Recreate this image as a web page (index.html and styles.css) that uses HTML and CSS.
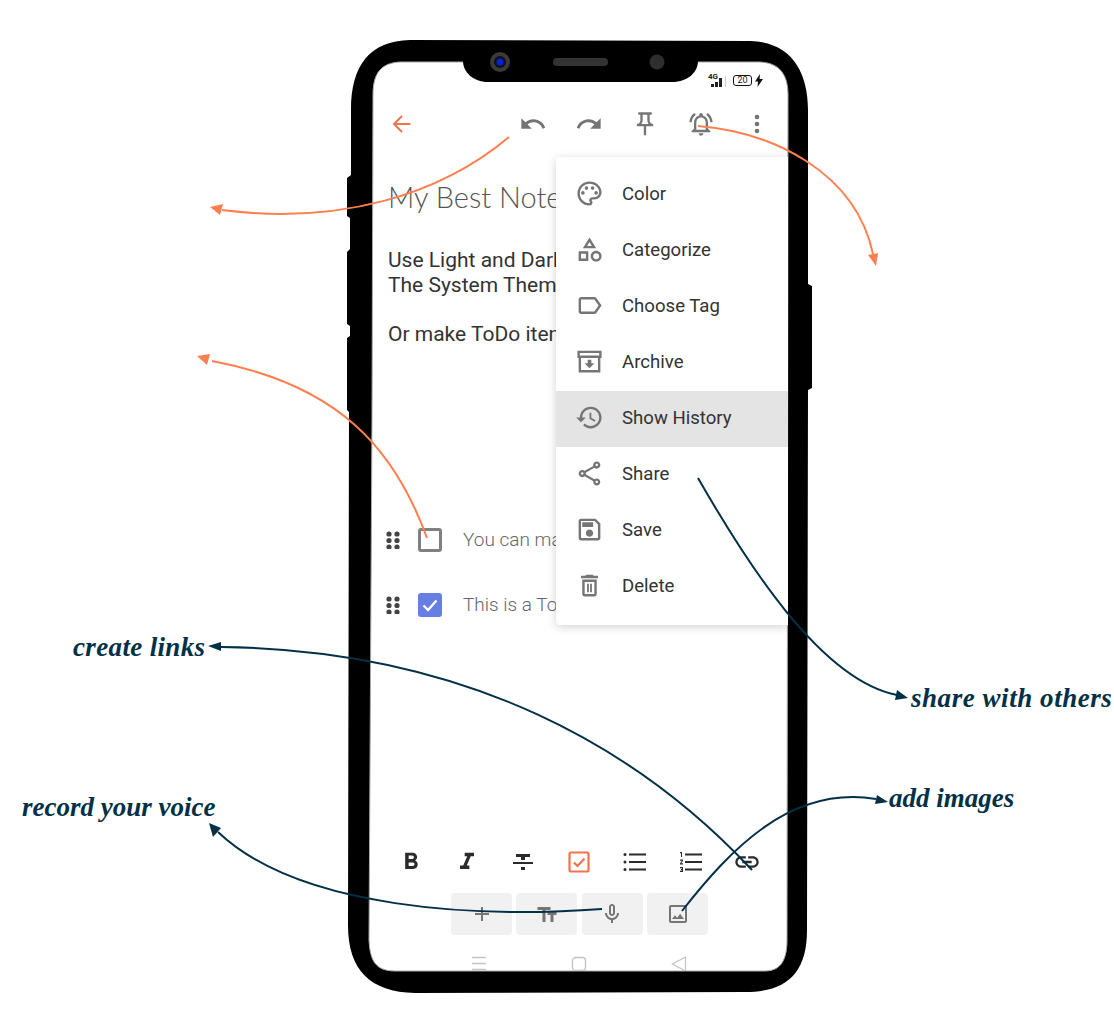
FILE: index.html
```html
<!DOCTYPE html>
<html>
<head>
  <title>Note editor overview</title>
  <link rel="stylesheet" href="styles.css">
</head>
<body>
  <div class="stage">
    <!-- phone body -->
    <svg class="layer" width="1114" height="1031" viewBox="0 0 1114 1031">
      <path fill="#000" d="M410 40L750 41C790 42 808 70 808 110L808 284L812 286L812 388L808 390L807 930C807 975 785 992 745 992L415 993C370 992 348 970 348 925L349 412L347 410L347 338L350 336L350 326L347 324L347 252L350 249L350 218L347 216L347 178L351 175L351 110C351 65 370 41 410 40Z"/>
      <path fill="#fff" stroke="#aaa" stroke-width="1" d="M373 95C373 72 382 63 400 62L760 62C780 63 788 75 788 95L787 940C787 958 782 971 765 971L395 971C375 971 370 960 369 940L372 420Z"/>
      <path fill="#000" d="M463 61L698 61C698 72 688 82 672 82L488 82C473 82 463 72 463 61Z"/>
      <circle cx="500" cy="62" r="10" fill="#3a3a3a"/>
      <circle cx="500" cy="62" r="6" fill="#111"/>
      <circle cx="500" cy="62" r="3.5" fill="#0a1fd8"/>
      <rect x="553" y="58" width="55" height="8" rx="4" fill="#333"/>
      <circle cx="657" cy="62" r="7.5" fill="#2e2e2e"/>
    </svg>

    <div class="screen">
      <div class="status">
        <div class="signal">
          <span class="net">4G</span>
          <div class="bars"><i class="b1"></i><i class="b2"></i><i class="b3"></i><i class="b4"></i></div>
        </div>
        <span class="battery">20</span>
        <svg class="bolt" width="8" height="13" viewBox="0 0 8 13"><path d="M5 0L0 7.5h3L2.5 13 8 5H4.6z"/></svg>
      </div>

      <div class="toolbar">
        <svg class="icon back" viewBox="0 0 24 24"><path d="M20.5 12H4M12 4l-8 8 8 8"/></svg>
        <div class="actions">
          <span class="cell"><svg class="icon big grey" viewBox="0 0 24 24"><path d="M12.5 8c-2.65 0-5.05.99-6.9 2.6L2 7v9h9l-3.62-3.62c1.39-1.16 3.16-1.88 5.12-1.88 3.54 0 6.55 2.31 7.6 5.5l2.37-.78C21.08 11.03 17.15 8 12.5 8z"/></svg></span>
          <span class="cell"><svg class="icon big grey" viewBox="0 0 24 24"><path d="M18.4 10.6C16.55 8.99 14.15 8 11.5 8c-4.65 0-8.58 3.03-9.96 7.22L3.9 16c1.05-3.19 4.05-5.5 7.6-5.5 1.95 0 3.73.72 5.12 1.88L13 16h9V7l-3.6 3.6z"/></svg></span>
          <span class="cell"><svg class="icon big grey" viewBox="0 0 24 24"><path d="M14 4v5c0 1.12.37 2.16 1 3H9c.65-.86 1-1.9 1-3V4h4m3-2H7c-.55 0-1 .45-1 1s.45 1 1 1h1v5c0 1.66-1.34 3-3 3v2h5.97v7l1 1 1-1v-7H19v-2c-1.66 0-3-1.34-3-3V4h1c.55 0 1-.45 1-1s-.45-1-1-1z"/></svg></span>
          <span class="cell"><svg class="icon big grey" viewBox="0 0 24 24"><path d="M7.58 4.08L6.15 2.65C3.75 4.48 2.17 7.3 2.03 10.5h2c.15-2.65 1.51-4.97 3.55-6.42zm12.39 6.42h2c-.15-3.2-1.73-6.02-4.12-7.85l-1.42 1.43c2.02 1.45 3.39 3.77 3.54 6.42zM18 11c0-3.07-1.64-5.64-4.5-6.32V4c0-.83-.67-1.5-1.5-1.5s-1.5.67-1.5 1.5v.68C7.63 5.36 6 7.92 6 11v5l-2 2v1h16v-1l-2-2v-5zm-2 6H8v-6c0-2.48 1.51-4.5 4-4.5s4 2.02 4 4.5v6zm-4 5c.14 0 .27-.01.4-.04.65-.14 1.18-.58 1.44-1.18.1-.24.15-.5.15-.78h-4c.01 1.1.9 2 2.01 2z"/></svg></span>
          <span class="cell"><svg class="icon big grey" viewBox="0 0 24 24"><circle cx="12" cy="6" r="2"/><circle cx="12" cy="12" r="2"/><circle cx="12" cy="18" r="2"/></svg></span>
        </div>
      </div>

      <h1 class="title">My Best Note</h1>
      <p class="text">Use Light and Dark mode<br>The System Theme<br><br>Or make ToDo items</p>

      <div class="todos">
        <div class="todo">
          <svg class="dots" width="14" height="18" viewBox="0 0 14 18"><circle cx="3" cy="3" r="2.6"/><circle cx="11" cy="3" r="2.6"/><circle cx="3" cy="9.5" r="2.6"/><circle cx="11" cy="9.5" r="2.6"/><circle cx="3" cy="16" r="2.6"/><circle cx="11" cy="16" r="2.6"/></svg>
          <span class="box"></span>
          <span class="todo-text">You can make lists</span>
        </div>
        <div class="todo">
          <svg class="dots" width="14" height="18" viewBox="0 0 14 18"><circle cx="3" cy="3" r="2.6"/><circle cx="11" cy="3" r="2.6"/><circle cx="3" cy="9.5" r="2.6"/><circle cx="11" cy="9.5" r="2.6"/><circle cx="3" cy="16" r="2.6"/><circle cx="11" cy="16" r="2.6"/></svg>
          <span class="box checked"><svg width="18" height="18" viewBox="0 0 18 18"><path d="M2.500 9.500l4.500 4.500 8.500-9.500"/></svg></span>
          <span class="todo-text">This is a ToDo</span>
        </div>
      </div>

      <div class="format">
        <span class="cell"><svg class="icon big dark" viewBox="0 0 24 24"><path d="M15.6 10.79c.97-.67 1.65-1.77 1.65-2.79 0-2.26-1.75-4-4-4H7v14h7.04c2.09 0 3.71-1.7 3.71-3.79 0-1.52-.86-2.82-2.15-3.42zM10 6.5h3c.83 0 1.5.67 1.5 1.5s-.67 1.5-1.5 1.5h-3v-3zm3.5 9H10v-3h3.5c.83 0 1.5.67 1.5 1.5s-.67 1.5-1.5 1.5z"/></svg></span>
        <span class="cell"><svg class="icon big dark" viewBox="0 0 24 24"><path d="M10 4v3h2.21l-3.42 8H6v3h8v-3h-2.21l3.42-8H18V4z"/></svg></span>
        <span class="cell"><svg class="icon dark" viewBox="0 0 24 24"><path d="M10 20h4v-3h-4v3zM5 4v3h5v3h4V7h5V4H5zM2 14h20v-2H2v2z"/></svg></span>
        <span class="cell"><svg class="icon todo-btn" viewBox="0 0 24 24"><rect x="2.5" y="2.5" width="19" height="19" rx="1.5"/><path d="M7 12.5l3.5 3.5L17.5 8.5"/></svg></span>
        <span class="cell"><svg class="icon dark" viewBox="0 0 24 24"><circle cx="2" cy="4.500" r="1.500"/><circle cx="2" cy="12" r="1.500"/><circle cx="2" cy="19.500" r="1.500"/><path d="M6 3.500h17v2H6zm0 7.500h17v2H6zm0 7.500h17v2H6z"/></svg></span>
        <span class="cell"><svg class="icon dark" viewBox="0 0 24 24"><path transform="translate(0,-3) scale(1,1.25)" d="M1 17h2v.5H2v1h1v.5H1v1h3v-4H1v1zm1-9h1V4H1v1h1v3zm-1 3h1.800L1 13.100v.9h3v-1H2.200L4 10.900V10H1v1z"/><path d="M6 3.500h17v2H6zm0 7.500h17v2H6zm0 7.500h17v2H6z"/></svg></span>
        <span class="cell"><svg class="icon big dark" viewBox="0 0 24 24"><path d="M3.9 12c0-1.71 1.39-3.1 3.1-3.1h4V7H7c-2.76 0-5 2.24-5 5s2.24 5 5 5h4v-1.9H7c-1.71 0-3.1-1.39-3.1-3.1zM8 13h8v-2H8v2zm9-6h-4v1.9h4c1.71 0 3.1 1.39 3.1 3.1s-1.39 3.1-3.1 3.1h-4V17h4c2.76 0 5-2.24 5-5s-2.24-5-5-5z"/></svg></span>
      </div>

      <div class="buttons">
        <span class="btn"><svg class="icon grey" viewBox="0 0 24 24"><path d="M19 13h-6v6h-2v-6H5v-2h6V5h2v6h6z"/></svg></span>
        <span class="btn"><svg class="icon grey" viewBox="0 0 24 24"><path d="M2.5 5v3h5v12h3V8h5V5h-13zm19 5h-9v3h3v7h3v-7h3v-3z"/></svg></span>
        <span class="btn"><svg class="icon grey" viewBox="0 0 24 24"><path d="M12 14c1.66 0 3-1.34 3-3V5c0-1.66-1.34-3-3-3S9 3.34 9 5v6c0 1.66 1.34 3 3 3zm-1-9c0-.55.45-1 1-1s1 .45 1 1v6c0 .55-.45 1-1 1s-1-.45-1-1V5zm6 6c0 2.76-2.24 5-5 5s-5-2.24-5-5H5c0 3.53 2.61 6.43 6 6.92V21h2v-3.08c3.39-.49 6-3.39 6-6.92h-2z"/></svg></span>
        <span class="btn"><svg class="icon grey" viewBox="0 0 24 24"><path d="M19 5v14H5V5h14m0-2H5c-1.1 0-2 .9-2 2v14c0 1.1.9 2 2 2h14c1.1 0 2-.9 2-2V5c0-1.1-.9-2-2-2zm-4.86 8.86l-3 3.87L9 13.14 6 17h12l-3.86-5.14z"/></svg></span>
      </div>

      <div class="nav">
        <span class="nav-cell"><svg width="16" height="16" viewBox="0 0 16 16"><path d="M1 1.5h14M1 7.5h14M1 13.5h14"/></svg></span>
        <span class="nav-cell"><svg width="16" height="16" viewBox="0 0 16 16"><rect x="1.5" y="1.5" width="13" height="13" rx="3"/></svg></span>
        <span class="nav-cell"><svg width="16" height="16" viewBox="0 0 16 16"><path d="M14.5 1L1.500 8l13 7z"/></svg></span>
      </div>

      <div class="menu">
        <div class="item"><svg class="icon" viewBox="0 0 24 24"><path d="M12 22C6.49 22 2 17.51 2 12S6.49 2 12 2s10 4.04 10 9c0 3.31-2.69 6-6 6h-1.77c-.28 0-.5.22-.5.5 0 .12.05.23.13.33.41.47.64 1.06.64 1.67 0 1.38-1.12 2.5-2.5 2.5zm0-18c-4.41 0-8 3.59-8 8s3.59 8 8 8c.28 0 .5-.22.5-.5 0-.16-.08-.28-.14-.35-.41-.46-.63-1.05-.63-1.65 0-1.38 1.12-2.5 2.5-2.5H16c2.21 0 4-1.79 4-4 0-3.86-3.59-7-8-7z"/><circle cx="6.500" cy="11.500" r="1.500"/><circle cx="9.500" cy="7.500" r="1.500"/><circle cx="14.500" cy="7.500" r="1.500"/><circle cx="17.500" cy="11.500" r="1.500"/></svg>Color</div>
        <div class="item"><svg class="icon" viewBox="0 0 24 24"><path d="M12 2l-5.500 9h11L12 2zm0 3.840L13.930 9h-3.870L12 5.840zM17.500 13c-2.490 0-4.500 2.010-4.500 4.500s2.010 4.500 4.500 4.500 4.500-2.010 4.500-4.500-2.010-4.500-4.500-4.500zm0 7c-1.380 0-2.500-1.120-2.500-2.500s1.120-2.500 2.500-2.500 2.500 1.120 2.500 2.500-1.120 2.500-2.500 2.500zM3 21.500h8v-8H3v8zm2-6h4v4H5v-4z"/></svg>Categorize</div>
        <div class="item"><svg class="icon" viewBox="0 0 24 24"><path d="M17.630 5.840C17.270 5.330 16.670 5 16 5L5 5.010C3.900 5.010 3 5.900 3 7v10c0 1.100.9 1.990 2 1.990L16 19c.67 0 1.270-.33 1.630-.84L22 12l-4.370-6.160zM16 17H5V7h11l3.550 5L16 17z"/></svg>Choose Tag</div>
        <div class="item"><svg class="icon" viewBox="0 0 24 24"><path fill-rule="evenodd" d="M2 3h20v6h-1v12H3V9H2V3zm2 2v2h16V5H4zm1 4v10h14V9H5z"/><path d="M10.500 10.500h3v3H16L12 17.500l-4-4h2.500z"/></svg>Archive</div>
        <div class="item active"><svg class="icon" viewBox="0 0 24 24"><path d="M13 3c-4.970 0-9 4.030-9 9H1l3.890 3.890.07.14L9 12H6c0-3.870 3.130-7 7-7s7 3.130 7 7-3.130 7-7 7c-1.930 0-3.680-.79-4.940-2.060l-1.420 1.420C8.270 19.990 10.510 21 13 21c4.970 0 9-4.030 9-9s-4.030-9-9-9zm-1 5v5l4.280 2.540.72-1.210-3.500-2.080V8H12z"/></svg>Show History</div>
        <div class="item"><svg class="icon" viewBox="0 0 24 24"><path d="M18 16.080c-.76 0-1.440.3-1.960.77L8.910 12.700c.05-.23.09-.46.09-.7s-.04-.47-.09-.7l7.050-4.110c.54.5 1.250.81 2.040.81 1.660 0 3-1.340 3-3s-1.340-3-3-3-3 1.340-3 3c0 .24.04.47.09.7L8.040 9.810C7.500 9.310 6.790 9 6 9c-1.660 0-3 1.340-3 3s1.340 3 3 3c.79 0 1.500-.31 2.040-.81l7.120 4.160c-.05.21-.08.43-.08.65 0 1.610 1.310 2.920 2.920 2.920s2.920-1.310 2.920-2.920-1.310-2.920-2.920-2.920zM18 4c.55 0 1 .45 1 1s-.45 1-1 1-1-.45-1-1 .45-1 1-1zM6 13c-.55 0-1-.45-1-1s.45-1 1-1 1 .45 1 1-.45 1-1 1zm12 7.020c-.55 0-1-.45-1-1s.45-1 1-1 1 .45 1 1-.45 1-1 1z"/></svg>Share</div>
        <div class="item"><svg class="icon" viewBox="0 0 24 24"><path d="M17 3H5c-1.110 0-2 .9-2 2v14c0 1.100.89 2 2 2h14c1.100 0 2-.9 2-2V7l-4-4zm2 16H5V5h11.170L19 7.830V19zm-7-7c-1.660 0-3 1.340-3 3s1.340 3 3 3 3-1.340 3-3-1.340-3-3-3zM6 6h9v4H6z"/></svg>Save</div>
        <div class="item"><svg class="icon" viewBox="0 0 24 24"><path d="M6 19c0 1.100.9 2 2 2h8c1.100 0 2-.9 2-2V7H6v12zM8 9h8v10H8V9zm7.500-5l-1-1h-5l-1 1H5v2h14V4z"/><path d="M10 10.500h1.500v7H10zm2.500 0H14v7h-1.500z"/></svg>Delete</div>
      </div>
    </div>

    <!-- annotation arrows -->
    <svg class="layer" width="1114" height="1031" viewBox="0 0 1114 1031">
      <g class="orange">
        <path d="M509 137C440 195 340 225 222 210"/>
        <polygon points="210,207 223,204 220,215"/>
        <path d="M698 126C770 132 855 170 873 254"/>
        <polygon points="868,255 878,253 876,266"/>
        <path d="M427 538C395 450 340 385 212 361"/>
        <polygon points="197,356 210,354 207,365"/>
      </g>
      <g class="navy">
        <path d="M698 478C745 560 820 680 897 695"/>
        <polygon points="908,698 897,690 895,700"/>
        <path d="M752 870C640 750 470 650 221 647"/>
        <polygon points="208,646 221,642 221,651"/>
        <path d="M602 909C480 918 300 910 218 832"/>
        <polygon points="209,823 221,828 213,837"/>
        <path d="M682 911C730 850 790 785 876 799"/>
        <polygon points="888,802 877,795 875,804"/>
      </g>
    </svg>

    <span class="label l-links">create links</span>
    <span class="label l-voice">record your voice</span>
    <span class="label l-share">share with others</span>
    <span class="label l-images">add images</span>
  </div>
</body>
</html>
```

FILE: styles.css
```css
* { box-sizing: border-box; }
body {
  margin: 0;
  background: #fff;
  font-family: Roboto, sans-serif;
  color: #333;
}
.stage {
  position: relative;
  width: 1114px;
  height: 1031px;
  overflow: hidden;
}
.layer {
  position: absolute;
  left: 0;
  top: 0;
  pointer-events: none;
}

/* screen */
.screen {
  position: absolute;
  left: 372px;
  top: 62px;
  width: 416px;
  height: 909px;
  display: flex;
  flex-direction: column;
  overflow: hidden;
}
.status {
  height: 26px;
  display: flex;
  justify-content: flex-end;
  align-items: flex-end;
  gap: 3px;
  padding: 0 25px 0 0;
}
.signal {
  position: relative;
  width: 20px;
  height: 14px;
  margin-right: 4px;
  margin-bottom: 1px;
}
.net {
  position: absolute;
  left: 2px;
  top: 0;
  font-size: 8px;
  line-height: 8px;
  font-weight: 700;
  color: #222;
}
.bars {
  position: absolute;
  left: 5px;
  bottom: 0;
  display: flex;
  align-items: flex-end;
  gap: 1px;
}
.bars i { display: block; width: 3px; background: #222; }
.bars .b1 { height: 3px; }
.bars .b2 { height: 5px; }
.bars .b3 { height: 9px; }
.bars .b4 { height: 11px; background: #ccc; margin-left: 2px; width: 1px; }
.battery {
  width: 19px;
  height: 11px;
  border: 1px solid #111;
  border-radius: 3px;
  font-size: 9px;
  line-height: 9px;
  text-align: center;
  color: #222;
  margin-bottom: 2px;
}
.bolt { fill: #111; margin-bottom: 1px; }

.icon { width: 24px; height: 24px; display: block; flex: none; }
.icon.big { width: 28px; height: 28px; }
.grey { fill: #757575; }
.dark { fill: #2b2b2b; }
.back { fill: none; stroke: #f2734f; stroke-width: 2; }
.todo-btn { fill: none; stroke: #f2734f; stroke-width: 2.2; }

.toolbar {
  height: 56px;
  margin-top: 8px;
  padding: 0 3px 0 18px;
  display: flex;
  align-items: center;
  justify-content: space-between;
}
.actions { display: flex; }
.cell {
  width: 56px;
  height: 56px;
  display: flex;
  align-items: center;
  justify-content: center;
}

/* note */
.title {
  margin: 25px 0 0 16px;
  font-family: Lato, sans-serif;
  font-size: 29px;
  line-height: 40px;
  font-weight: 300;
  color: #555;
  white-space: nowrap;
}
.text {
  margin: 31px 0 0 16px;
  font-size: 21px;
  line-height: 24.5px;
  color: #333;
  white-space: nowrap;
}
.todos { margin-top: 161px; }
.todo {
  height: 65px;
  padding-left: 14px;
  display: flex;
  align-items: center;
}
.dots { fill: #444; flex: none; }
.box {
  width: 24px;
  height: 24px;
  margin-left: 18px;
  border: 3px solid #808080;
  border-radius: 3px;
  flex: none;
  display: flex;
  align-items: center;
  justify-content: center;
}
.box.checked { background: #677ee5; border-color: #677ee5; }
.box svg { fill: none; stroke: #fff; stroke-width: 2.4; flex: none; }
.todo-text {
  margin-left: 21px;
  font-size: 19px;
  font-weight: 300;
  color: #666;
  white-space: nowrap;
}

/* bottom bars */
.format {
  margin-top: auto;
  height: 56px;
  padding-left: 11px;
  display: flex;
}
.buttons {
  margin-top: 3px;
  padding-left: 79px;
  display: flex;
  gap: 4.400px;
}
.btn {
  width: 61px;
  height: 42px;
  background: #f1f1f1;
  border-radius: 4px;
  display: flex;
  align-items: center;
  justify-content: center;
}
.nav {
  height: 36px;
  padding: 21px 2px 0 0;
  display: flex;
  justify-content: center;
}
.nav-cell {
  width: 100px;
  display: flex;
  justify-content: center;
}
.nav svg { fill: none; stroke: #c4c4c4; stroke-width: 1.300; flex: none; overflow: visible; }

/* popup menu */
.menu {
  position: absolute;
  left: 184px;
  top: 95px;
  width: 232px;
  padding: 10px 0;
  background: #fff;
  border-radius: 4px 0 0 4px;
  box-shadow: 0 2px 10px rgba(0, 0, 0, 0.18);
}
.item {
  height: 56px;
  padding: 0 0 3px 18.500px;
  display: flex;
  align-items: center;
  gap: 18.500px;
  font-size: 18.600px;
  color: #333;
}
.item .icon { width: 29px; height: 29px; fill: #757575; }
.item.active { background: #e4e4e4; }

/* annotations */
.orange path { fill: none; stroke: #ff7f50; stroke-width: 2; }
.orange polygon { fill: #ff7f50; }
.navy path { fill: none; stroke: #023047; stroke-width: 2; }
.navy polygon { fill: #023047; }
.label {
  position: absolute;
  font-family: "Liberation Serif", serif;
  font-style: italic;
  font-weight: 700;
  font-size: 27px;
  line-height: 34px;
  color: #023047;
  white-space: nowrap;
}
.l-links { left: 73px; top: 630px; letter-spacing: 0.35px; }
.l-voice { left: 22px; top: 790px; }
.l-share { left: 911px; top: 681px; letter-spacing: 0.55px; }
.l-images { left: 889px; top: 781px; }
```
